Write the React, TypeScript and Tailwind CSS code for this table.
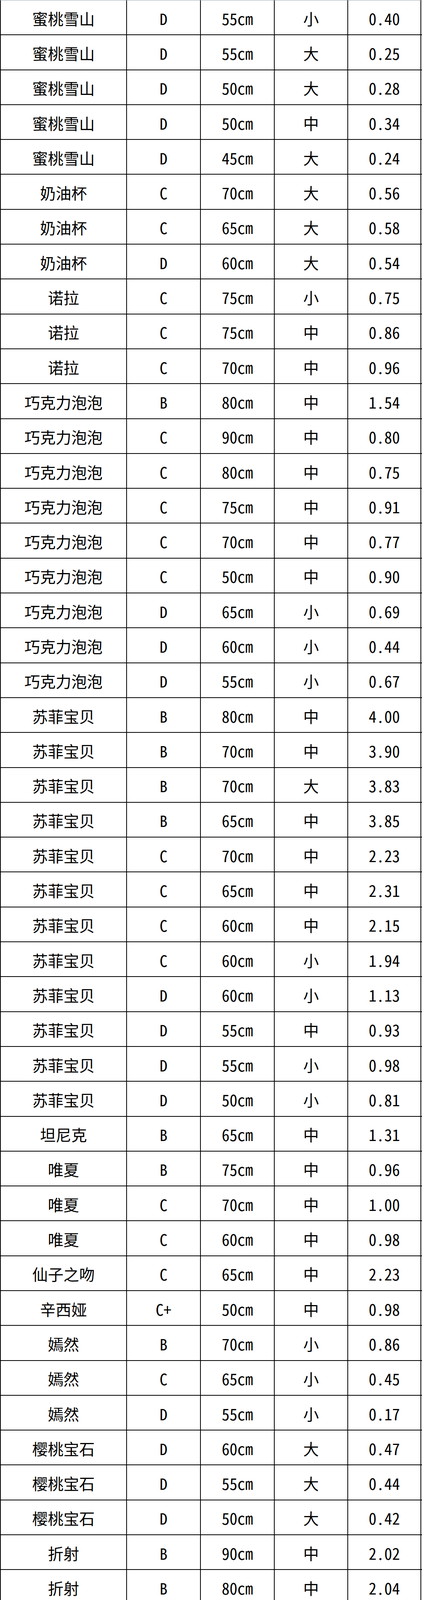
import React from "react";

const raw = `蜜桃雪山,D,55cm,小,0.40
蜜桃雪山,D,55cm,大,0.25
蜜桃雪山,D,50cm,大,0.28
蜜桃雪山,D,50cm,中,0.34
蜜桃雪山,D,45cm,大,0.24
奶油杯,C,70cm,大,0.56
奶油杯,C,65cm,大,0.58
奶油杯,D,60cm,大,0.54
诺拉,C,75cm,小,0.75
诺拉,C,75cm,中,0.86
诺拉,C,70cm,中,0.96
巧克力泡泡,B,80cm,中,1.54
巧克力泡泡,C,90cm,中,0.80
巧克力泡泡,C,80cm,中,0.75
巧克力泡泡,C,75cm,中,0.91
巧克力泡泡,C,70cm,中,0.77
巧克力泡泡,C,50cm,中,0.90
巧克力泡泡,D,65cm,小,0.69
巧克力泡泡,D,60cm,小,0.44
巧克力泡泡,D,55cm,小,0.67
苏菲宝贝,B,80cm,中,4.00
苏菲宝贝,B,70cm,中,3.90
苏菲宝贝,B,70cm,大,3.83
苏菲宝贝,B,65cm,中,3.85
苏菲宝贝,C,70cm,中,2.23
苏菲宝贝,C,65cm,中,2.31
苏菲宝贝,C,60cm,中,2.15
苏菲宝贝,C,60cm,小,1.94
苏菲宝贝,D,60cm,小,1.13
苏菲宝贝,D,55cm,中,0.93
苏菲宝贝,D,55cm,小,0.98
苏菲宝贝,D,50cm,小,0.81
坦尼克,B,65cm,中,1.31
唯夏,B,75cm,中,0.96
唯夏,C,70cm,中,1.00
唯夏,C,60cm,中,0.98
仙子之吻,C,65cm,中,2.23
辛西娅,C+,50cm,中,0.98
嫣然,B,70cm,小,0.86
嫣然,C,65cm,小,0.45
嫣然,D,55cm,小,0.17
樱桃宝石,D,60cm,大,0.47
樱桃宝石,D,55cm,大,0.44
樱桃宝石,D,50cm,大,0.42
折射,B,90cm,中,2.02
折射,B,80cm,中,2.04
折射,B,75cm,中,1.97
折射,C,85cm,中,1.74
折射,C,85cm,大,1.59
折射,C,80cm,中,1.40
折射,C,80cm,小,1.64
折射,C,80cm,大,1.74
折射,C,75cm,中,1.59
折射,C,70cm,中,1.72
折射,C,65cm,中,1.76
折射,C,60cm,中,1.74
折射,D,70cm,中,1.13
折射,D,65cm,小,1.19
折射,D,60cm,中,0.99
折射,D,60cm,小,1.27
折射,D,55cm,小,1.24
朱丽叶塔,C,65cm,中,1.70
猪小姐,B,70cm,中,1.38
猪小姐,C,70cm,中,1.18
猪小姐,C,60cm,中,1.20
猪小姐,D,50cm,中,0.80
紫霞仙子,B,75cm,中,1.38
紫霞仙子,B,70cm,中,1.32
紫霞仙子,C,60cm,中,0.76
紫霞仙子,C,60cm,小,0.84
紫霞仙子,D,65cm,中,0.58
紫霞仙子,D,55cm,小,0.47
紫霞仙子,D,50cm,中,0.41
紫霞仙子,D,50cm,小,0.54
自由,C,80cm,中,0.48`;

const rows = raw.split("\n").map((l) => l.split(","));

export default function App() {
  return (
    <div className="w-[1080px] h-[6698px] bg-white border-t border-gray-400 flex flex-col font-['Noto_Sans_Mono_CJK_SC','Noto_Sans_CJK_SC',monospace] text-[40px] leading-none text-black">
      {rows.map((r, i) => (
        <div
          key={i}
          className="flex-1 min-h-0 grid grid-cols-[325px_189px_189px_188px_187px] border-b-2 border-black"
        >
          {r.map((c, j) => (
            <div
              key={j}
              className={
                "flex items-center justify-center pt-[4px] border-r-2 border-black" +
                (j === 0 ? " border-l-2" : "")
              }
            >
              {c}
            </div>
          ))}
        </div>
      ))}
    </div>
  );
}
